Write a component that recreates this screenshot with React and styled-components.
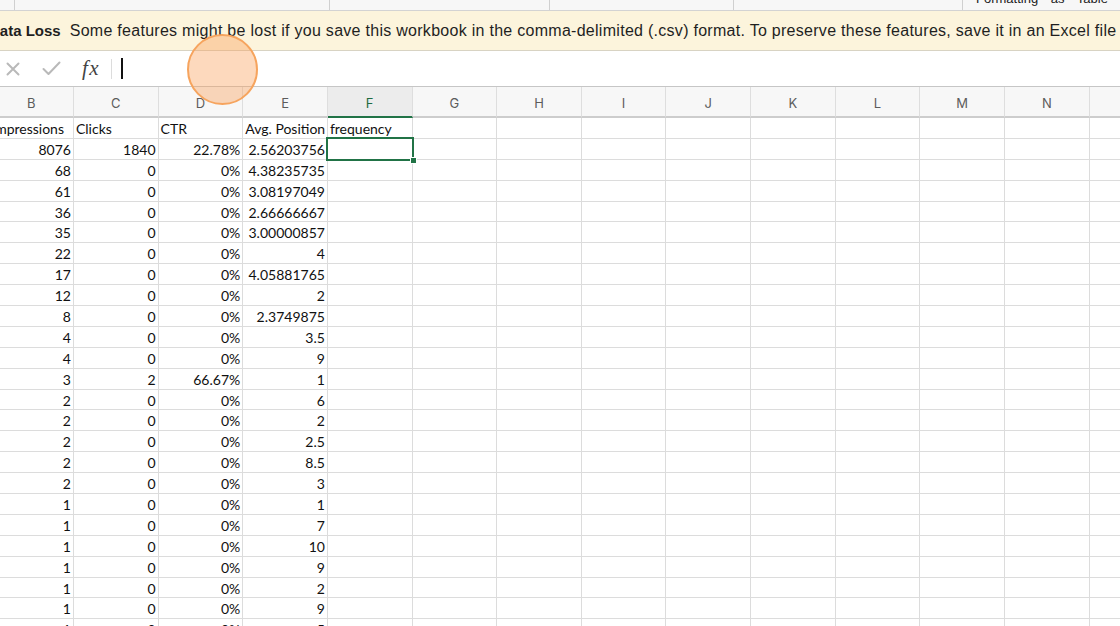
import React from "react";
import styled, { createGlobalStyle } from "styled-components";

const GlobalStyle = createGlobalStyle`
  html, body { margin: 0; padding: 0; background: #fff; overflow: hidden; }
  * { box-sizing: border-box; }
`;

const Page = styled.div`
  position: relative;
  width: 1120px;
  height: 626px;
  overflow: hidden;
  background: #fff;
`;

const TopStrip = styled.div`
  display: flex;
  height: 11px;
  background: #f7f7f7;
  border-bottom: 1px solid #d3d3d3;
  overflow: hidden;
`;

const StripSeg = styled.div`
  flex: 0 0 ${(p) => p.$w}px;
  border-right: 1px solid #d0d0d0;
  overflow: hidden;
  position: relative;
`;

const StripRest = styled.div`
  flex: 1;
  overflow: hidden;
  padding-left: 13px;
`;

const StripText = styled.div`
  font-family: "Liberation Sans", Arial, sans-serif;
  font-size: 13px;
  color: #222;
  white-space: nowrap;
  line-height: 13px;
  margin-top: -8px;
  word-spacing: 9px;
`;

const WarningBar = styled.div`
  height: 40px;
  background: #fcf4dc;
  border-bottom: 1px solid #d8d3c3;
  display: flex;
  align-items: center;
  white-space: nowrap;
  overflow: hidden;
  font-family: "Liberation Sans", Arial, sans-serif;
  color: #1f1f1f;
`;

const WarnTitle = styled.span`
  font-weight: 700;
  font-size: 15px;
  margin-left: -11px;
  margin-right: 9px;
`;

const WarnText = styled.span`
  font-size: 16px;
  letter-spacing: 0.28px;
`;

const FormulaBar = styled.div`
  height: 36px;
  display: flex;
  align-items: center;
  border-bottom: 1px solid #c6c6c6;
  background: #fff;
`;

const IconSlot = styled.div`
  width: ${(p) => p.$w}px;
  display: flex;
  justify-content: center;
  align-items: center;
`;

const Fx = styled.span`
  font-family: "Liberation Serif", "Times New Roman", serif;
  font-style: italic;
  font-size: 21px;
  color: #444;
  margin-left: 6px;
  margin-right: 11px;
  letter-spacing: 1.5px;
`;

const Divider = styled.div`
  width: 1px;
  height: 20px;
  background: #dcdcdc;
`;

const Caret = styled.div`
  width: 2px;
  height: 21px;
  background: #111;
  margin-left: 9px;
`;

const Sheet = styled.div`
  margin-left: -10.7px;
  display: grid;
  grid-template-columns: repeat(15, 84.65px);
`;

const ColHead = styled.div`
  height: 31px;
  display: flex;
  align-items: center;
  justify-content: center;
  font-family: "Inter", "Liberation Sans", sans-serif;
  font-size: 13px;
  color: ${(p) => (p.$active ? "#1d6b40" : "#5c5c5c")};
  background: ${(p) => (p.$active ? "#ececec" : "#f7f7f7")};
  border-right: 1px solid #dedede;
  border-bottom: 2px solid ${(p) => (p.$active ? "#217346" : "#cdcdcd")};
  padding-top: 2px;
`;

const Cell = styled.div`
  position: relative;
  height: 20.9px;
  border-right: 1px solid #dcdcdc;
  border-bottom: 1px solid #dcdcdc;
  font-family: "Lato", "Liberation Sans", sans-serif;
  font-size: 14px;
  color: #111;
  line-height: 21px;
  padding: 0 2px 0 2px;
  text-align: ${(p) => (p.$num ? "right" : "left")};
  white-space: nowrap;
  overflow: ${(p) => (p.$spill ? "visible" : "hidden")};
  z-index: ${(p) => (p.$spill ? 1 : 0)};
`;

const Selection = styled.div`
  position: absolute;
  left: -2px;
  top: -2px;
  right: -2px;
  bottom: -2px;
  border: 2px solid #217346;
  pointer-events: none;
  z-index: 3;
`;

const Handle = styled.div`
  position: absolute;
  right: -5px;
  bottom: -5px;
  width: 7px;
  height: 7px;
  background: #217346;
  border: 1px solid #fff;
`;

const ClickMark = styled.div`
  position: absolute;
  left: 187px;
  top: 34px;
  width: 71px;
  height: 71px;
  border-radius: 50%;
  background: rgba(249, 160, 90, 0.4);
  border: 2px solid #f6a45e;
  z-index: 10;
`;

const cols = ["B", "C", "D", "E", "F", "G", "H", "I", "J", "K", "L", "M", "N", "O", "P"];

const rows = [
  ["8076", "1840", "22.78%", "2.56203756"],
  ["68", "0", "0%", "4.38235735"],
  ["61", "0", "0%", "3.08197049"],
  ["36", "0", "0%", "2.66666667"],
  ["35", "0", "0%", "3.00000857"],
  ["22", "0", "0%", "4"],
  ["17", "0", "0%", "4.05881765"],
  ["12", "0", "0%", "2"],
  ["8", "0", "0%", "2.3749875"],
  ["4", "0", "0%", "3.5"],
  ["4", "0", "0%", "9"],
  ["3", "2", "66.67%", "1"],
  ["2", "0", "0%", "6"],
  ["2", "0", "0%", "2"],
  ["2", "0", "0%", "2.5"],
  ["2", "0", "0%", "8.5"],
  ["2", "0", "0%", "3"],
  ["1", "0", "0%", "1"],
  ["1", "0", "0%", "7"],
  ["1", "0", "0%", "10"],
  ["1", "0", "0%", "9"],
  ["1", "0", "0%", "2"],
  ["1", "0", "0%", "9"],
  ["1", "0", "0%", "5"],
];

const headers = ["Impressions", "Clicks", "CTR", "Avg. Position", "frequency"];

export default function App() {
  return (
    <Page>
      <GlobalStyle />
      <TopStrip>
        <StripSeg $w={15} />
        <StripSeg $w={315} />
        <StripSeg $w={220} />
        <StripSeg $w={184} />
        <StripSeg $w={229} />
        <StripRest>
          <StripText>Formatting as Table</StripText>
        </StripRest>
      </TopStrip>
      <WarningBar>
        <WarnTitle>Data Loss</WarnTitle>
        <WarnText>
          Some features might be lost if you save this workbook in the comma-delimited (.csv) format. To preserve these features, save it in an Excel file format.
        </WarnText>
      </WarningBar>
      <FormulaBar>
        <IconSlot $w={26}>
          <svg width="14" height="14" viewBox="0 0 14 14">
            <path d="M1.5 1.5 L12.5 12.5 M12.5 1.5 L1.5 12.5" stroke="#b9b9b9" strokeWidth="2" strokeLinecap="round" />
          </svg>
        </IconSlot>
        <IconSlot $w={50}>
          <svg width="19" height="15" viewBox="0 0 19 15">
            <path d="M1.5 8 L6.5 13 L17.5 1.5" stroke="#b9b9b9" strokeWidth="2" fill="none" strokeLinecap="round" strokeLinejoin="round" />
          </svg>
        </IconSlot>
        <Fx>fx</Fx>
        <Divider />
        <Caret />
      </FormulaBar>
      <Sheet>
        {cols.map((c) => (
          <ColHead key={c} $active={c === "F"}>
            {c}
          </ColHead>
        ))}
        {cols.map((c, i) => (
          <Cell key={"h" + c} $spill={i < 5}>
            {headers[i] || ""}
          </Cell>
        ))}
        {rows.map((r, ri) =>
          cols.map((c, i) => {
            const selected = ri === 0 && c === "F";
            return (
              <Cell key={ri + c} $num $spill={selected}>
                {r[i] || ""}
                {selected && (
                  <Selection>
                    <Handle />
                  </Selection>
                )}
              </Cell>
            );
          })
        )}
      </Sheet>
      <ClickMark />
    </Page>
  );
}
